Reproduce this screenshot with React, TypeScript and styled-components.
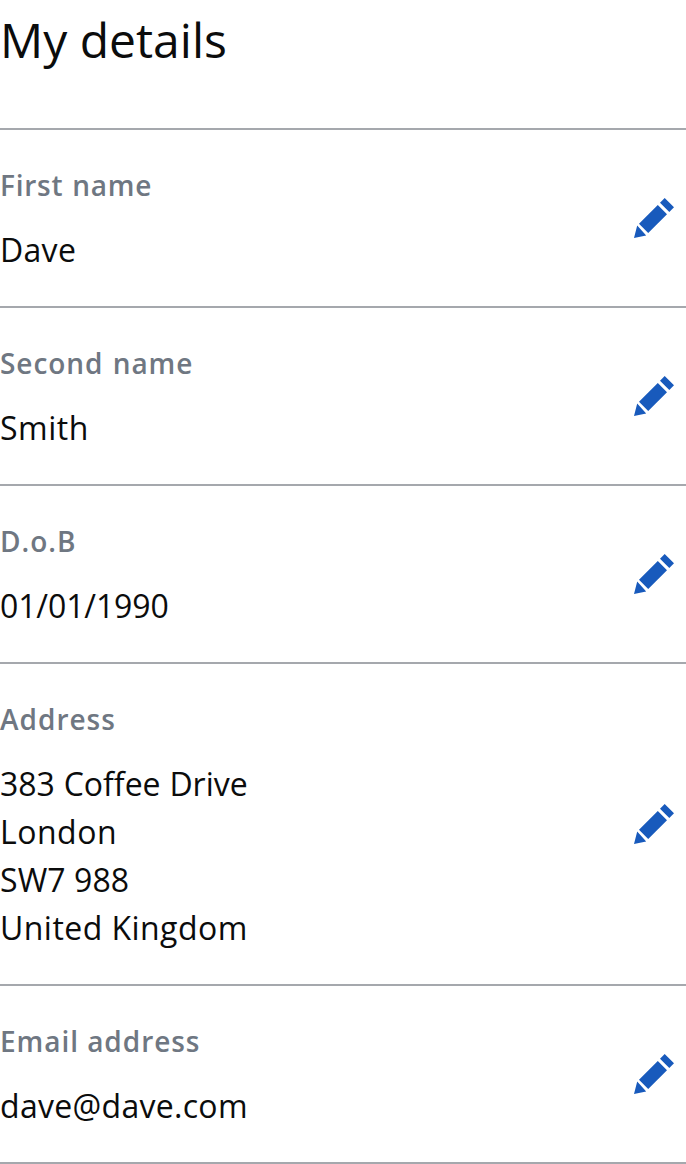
import React from "react";
import styled, { createGlobalStyle } from "styled-components";

const GlobalStyle = createGlobalStyle`
  body { margin: 0; background: #fff; color: #0b0c0c; font-family: "Open Sans", sans-serif; overflow: hidden; }
`;
const Page = styled.main`display: flex; flex-direction: column; width: 100%;`;
const Title = styled.h1`
  margin: 0; height: 128px; box-sizing: border-box; padding-top: 8px;
  font-size: 48px; line-height: 64px; font-weight: 400;
`;
const List = styled.dl`margin: 0; border-top: 2px solid #a5a8ad;`;
const Row = styled.div`
  display: flex; align-items: center; justify-content: space-between;
  padding: 32px 8px 32px 0; border-bottom: 2px solid #a5a8ad;
`;
const Label = styled.dt<{ $tracking: number; $gap: number }>`
  font-size: 28px; line-height: 46px; font-weight: 600; color: #6f7782;
  letter-spacing: ${({ $tracking }) => $tracking}px;
  word-spacing: ${({ $gap }) => $gap}px;
  margin-bottom: 18px;
`;
const Value = styled.dd`margin: 0; font-size: 32px; line-height: 48px;`;
const Line = styled.div<{ $tracking: number; $gap?: number }>`
  letter-spacing: ${({ $tracking }) => ($tracking ? `${$tracking}px` : "normal")};
  word-spacing: ${({ $gap = 0 }) => $gap}px;
`;
const EditButton = styled.button`
  display: flex; padding: 0; border: 0; background: none; color: #185abc; cursor: pointer;
`;

type LineData = { text: string; tracking: number; gap?: number };
type Detail = { label: string; tracking: number; gap: number; lines: LineData[] };

const details: Detail[] = [
  { label: "First name", tracking: 0.75, gap: 1, lines: [{ text: "Dave", tracking: 0.3 }] },
  { label: "Second name", tracking: 0.95, gap: 1, lines: [{ text: "Smith", tracking: 0.5 }] },
  { label: "D.o.B", tracking: 1, gap: 0, lines: [{ text: "01/01/1990", tracking: -0.12 }] },
  {
    label: "Address", tracking: 1, gap: 0,
    lines: [
      { text: "383 Coffee Drive", tracking: 0, gap: 0.5 },
      { text: "London", tracking: 0.5 },
      { text: "SW7 988", tracking: 0.08 },
      { text: "United Kingdom", tracking: 0.45 },
    ],
  },
  { label: "Email address", tracking: 0.95, gap: 0, lines: [{ text: "dave@dave.com", tracking: 0.3 }] },
];

const Pencil = () => (
  <svg width="48" height="48" viewBox="0 0 48 48" fill="currentColor" aria-hidden="true">
    <path d="M34.7 4 44 13.3 39.3 18 30 8.7ZM27.8 11 37 20.2 18.2 39 9 29.8ZM7.2 31.6 16.2 41.6 4 44Z" />
  </svg>
);

export default function App() {
  return (
    <Page>
      <GlobalStyle />
      <Title>My details</Title>
      <List>
        {details.map(({ label, tracking, gap, lines }) => (
          <Row key={label}>
            <div>
              <Label $tracking={tracking} $gap={gap}>{label}</Label>
              <Value>
                {lines.map((line) => (
                  <Line key={line.text} $tracking={line.tracking} $gap={line.gap}>{line.text}</Line>
                ))}
              </Value>
            </div>
            <EditButton aria-label={`Edit ${label}`}><Pencil /></EditButton>
          </Row>
        ))}
      </List>
    </Page>
  );
}
